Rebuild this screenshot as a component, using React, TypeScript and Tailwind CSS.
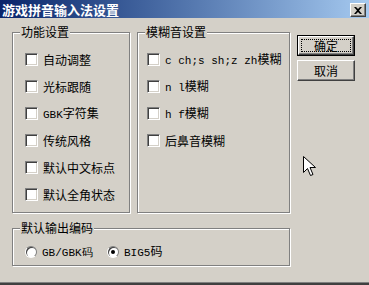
import { ReactNode } from "react";

const cjk = "font-['SimSun','Noto_Sans_CJK_SC',sans-serif]";
const etched = "border border-[#808080] shadow-[inset_1px_1px_0_#ffffff,1px_1px_0_#ffffff]";

function Latin({ children }: { children: ReactNode }) {
  return <span className="font-['Liberation_Mono',monospace] text-[11px]">{children}</span>;
}

function Check({ label }: { label: ReactNode }) {
  return (
    <div className="flex h-[27px] items-center">
      <span className="block h-[13px] w-[13px] border border-t-[#808080] border-l-[#808080] border-b-white border-r-white bg-white shadow-[inset_1px_1px_0_#404040,inset_-1px_-1px_0_#d4d0c8]" />
      <span className="ml-[5px] whitespace-nowrap">{label}</span>
    </div>
  );
}

function Radio({ label, on }: { label: ReactNode; on?: boolean }) {
  return (
    <div className="flex items-center">
      <span className="relative flex h-[12px] w-[12px] items-center justify-center rounded-full bg-white [background:conic-gradient(from_315deg,#808080_0deg,#808080_180deg,#ffffff_180deg)]">
        <span className="flex h-[10px] w-[10px] items-center justify-center rounded-full bg-white shadow-[inset_1px_1px_0_#404040]">
          {on && <span className="block h-[4px] w-[4px] rounded-full bg-black" />}
        </span>
      </span>
      <span className="ml-[5px] whitespace-nowrap">{label}</span>
    </div>
  );
}

function Button({ children, def }: { children: ReactNode; def?: boolean }) {
  return (
    <div className={def ? "h-[21px] w-[58px] border border-black" : "h-[21px] w-[58px]"}>
      <div className="flex h-full w-full border border-t-white border-l-white border-r-[#404040] border-b-[#404040] p-[2px] shadow-[inset_-1px_-1px_0_#808080]">
        <div
          className={
            def
              ? "flex flex-1 items-center justify-center border border-dotted border-black leading-[13px]"
              : "flex flex-1 items-center justify-center leading-[13px]"
          }
        >
          {children}
        </div>
      </div>
    </div>
  );
}

export default function App() {
  return (
    <div className={`relative flex h-[285px] w-[369px] flex-col overflow-hidden bg-[#d4d0c8] text-[12px] text-black ${cjk}`}>
      {/* title bar */}
      <div className="flex h-[18px] items-center justify-between bg-gradient-to-r from-[#0a246a] to-[#a6caf0] pl-[2px] pr-[3px]">
        <span className="text-[13px] font-bold leading-none text-white">游戏拼音输入法设置</span>
        <span className="mt-[2px] flex h-[14px] w-[16px] items-center justify-center border border-t-white border-l-white border-r-[#404040] border-b-[#404040] bg-[#d4d0c8] shadow-[inset_-1px_-1px_0_#808080]">
          <svg width="8" height="7" viewBox="0 0 8 7">
            <path d="M0 0h2l2 2 2-2h2L5 3.5 8 7H6L4 5 2 7H0l3-3.5z" fill="#000" />
          </svg>
        </span>
      </div>

      <div className="flex flex-1 flex-col pl-[12px] pt-[7px]">
        <div className="flex gap-[7px]">
          <fieldset className={`h-[188px] w-[118px] ${etched}`}>
            <legend className="ml-[7px] px-[1px] leading-[14px] bg-[#d4d0c8]">功能设置</legend>
            <div className="flex flex-col pl-[12px] pt-[7px]">
              <Check label="自动调整" />
              <Check label="光标跟随" />
              <Check label={<><Latin>GBK</Latin>字符集</>} />
              <Check label="传统风格" />
              <Check label="默认中文标点" />
              <Check label="默认全角状态" />
            </div>
          </fieldset>

          <fieldset className={`h-[188px] w-[153px] ${etched}`}>
            <legend className="ml-[7px] px-[1px] leading-[14px] bg-[#d4d0c8]">模糊音设置</legend>
            <div className="flex flex-col pl-[9px] pt-[7px]">
              <Check label={<><Latin>c ch;s sh;z zh</Latin>模糊</>} />
              <Check label={<><Latin>n l</Latin>模糊</>} />
              <Check label={<><Latin>h f</Latin>模糊</>} />
              <Check label="后鼻音模糊" />
            </div>
          </fieldset>

          <div className="flex flex-col gap-[4px] pt-[10px]">
            <Button def>确定</Button>
            <Button>取消</Button>
          </div>
        </div>

        <fieldset className={`mt-[8px] h-[45px] w-[278px] ${etched}`}>
          <legend className="ml-[7px] px-[1px] leading-[14px] bg-[#d4d0c8]">默认输出编码</legend>
          <div className="flex items-center pl-[12px] pt-[7px]">
            <div className="w-[82px]">
              <Radio label={<Latin>GB/GBK码</Latin>} />
            </div>
            <Radio on label={<><Latin>BIG5</Latin>码</>} />
          </div>
        </fieldset>
      </div>

      <div className="h-[3px] border-t border-[#808080] bg-[#404040]" />

      {/* mouse pointer */}
      <svg className="absolute left-[303px] top-[156px]" width="13" height="21" viewBox="0 0 13 21">
        <path d="M0.5 0.5v16l4-4 3 7 2.5-1-3-7h5.5z" fill="#fff" stroke="#000" strokeWidth="1" />
      </svg>
    </div>
  );
}
